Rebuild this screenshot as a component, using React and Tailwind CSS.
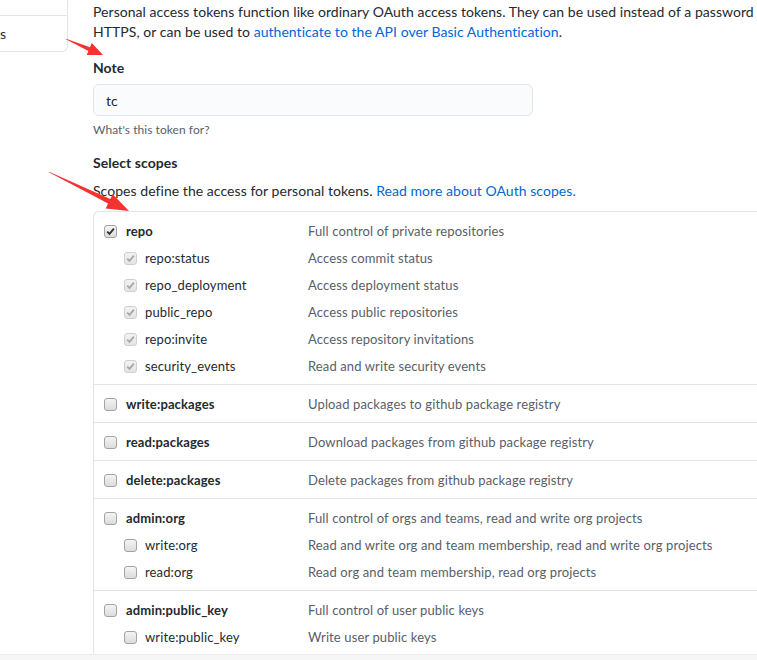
const FONT = { fontFamily: "Lato, 'Noto Sans', sans-serif" };

function arrowPoints(tx, ty, hx, hy, tailW, shaftW, headL, headW) {
  const dx = hx - tx, dy = hy - ty;
  const len = Math.sqrt(dx * dx + dy * dy);
  const ux = dx / len, uy = dy / len;
  const px = -uy, py = ux;
  const bx = hx - ux * headL, by = hy - uy * headL;
  const pts = [
    [tx + px * tailW / 2, ty + py * tailW / 2],
    [bx + px * shaftW / 2, by + py * shaftW / 2],
    [bx + px * headW / 2, by + py * headW / 2],
    [hx, hy],
    [bx - px * headW / 2, by - py * headW / 2],
    [bx - px * shaftW / 2, by - py * shaftW / 2],
    [tx - px * tailW / 2, ty - py * tailW / 2],
  ];
  return pts.map(p => p[0].toFixed(1) + "," + p[1].toFixed(1)).join(" ");
}

function Checkbox({ checked, disabled }) {
  if (disabled) {
    return (
      <span className="flex h-[13px] w-[13px] shrink-0 items-center justify-center rounded-[3px] border border-[#cfcfcf] bg-gradient-to-b from-[#f2f2f2] to-[#e4e4e4]">
        {checked && (
          <svg width="9" height="9" viewBox="0 0 9 9">
            <path d="M1.2 4.6 L3.5 6.9 L7.9 1.6" fill="none" stroke="#a9a9a9" strokeWidth="1.8" />
          </svg>
        )}
      </span>
    );
  }
  return (
    <span className="flex h-[13px] w-[13px] shrink-0 items-center justify-center rounded-[3px] border border-[#a3a3a3] bg-gradient-to-b from-[#f4f4f4] to-[#dcdcdc]">
      {checked && (
        <svg width="9" height="9" viewBox="0 0 9 9">
          <path d="M1.2 4.6 L3.5 6.9 L7.9 1.6" fill="none" stroke="#333" strokeWidth="1.8" />
        </svg>
      )}
    </span>
  );
}

const groups = [
  {
    name: "repo",
    desc: "Full control of private repositories",
    checked: true,
    subs: [
      ["repo:status", "Access commit status"],
      ["repo_deployment", "Access deployment status"],
      ["public_repo", "Access public repositories"],
      ["repo:invite", "Access repository invitations"],
      ["security_events", "Read and write security events"],
    ],
    subChecked: true,
  },
  { name: "write:packages", desc: "Upload packages to github package registry" },
  { name: "read:packages", desc: "Download packages from github package registry" },
  { name: "delete:packages", desc: "Delete packages from github package registry" },
  {
    name: "admin:org",
    desc: "Full control of orgs and teams, read and write org projects",
    subs: [
      ["write:org", "Read and write org and team membership, read and write org projects"],
      ["read:org", "Read org and team membership, read org projects"],
    ],
  },
  {
    name: "admin:public_key",
    desc: "Full control of user public keys",
    subs: [
      ["write:public_key", "Write user public keys"],
      ["read:public_key", "Read user public keys"],
    ],
  },
];

function Group({ g, first }) {
  return (
    <div className={"flex flex-col gap-[7px] pt-[9px] pb-[8px] " + (first ? "" : "border-t border-[#e1e4e8]")}>
      <div className="flex h-[20px] shrink-0 items-center pl-[10px]">
        <div className="flex w-[204px] shrink-0 items-center gap-[9px]">
          <Checkbox checked={g.checked} />
          <span className="font-bold text-[#24292e]">{g.name}</span>
        </div>
        <span className="whitespace-nowrap text-[#586069]">{g.desc}</span>
      </div>
      {(g.subs || []).map(([n, d]) => (
        <div key={n} className="flex h-[20px] shrink-0 items-center pl-[30px]">
          <div className="flex w-[184px] shrink-0 items-center gap-[8px]">
            <Checkbox checked={g.subChecked} disabled={g.subChecked} />
            <span className="text-[#24292e]">{n}</span>
          </div>
          <span className="whitespace-nowrap text-[#586069]">{d}</span>
        </div>
      ))}
    </div>
  );
}

export default function App() {
  return (
    <div style={FONT} className="relative flex h-[660px] w-[757px] flex-col overflow-hidden bg-white text-[14px] tracking-[0.05px] text-[#24292e]">
      <div className="flex h-[654px] shrink-0 items-start overflow-hidden">
        {/* sidebar */}
        <div className="mt-[-30px] flex h-[82px] w-[68px] shrink-0 flex-col overflow-hidden rounded-br-[6px] border-r border-b border-[#e1e4e8]">
          <div className="h-[45px] shrink-0"></div>
          <div className="flex flex-1 justify-end overflow-hidden whitespace-nowrap border-t border-[#e1e4e8] pr-[61px] pt-[8px] leading-[20px]">
            <span className="shrink-0">Personal access tokens</span>
          </div>
        </div>
        {/* main */}
        <div className="ml-[25px] w-[760px] shrink-0 pt-[2px]">
          <p className="leading-[20px]">
            Personal access tokens function like ordinary OAuth access tokens. They can be used instead of a password for Git over HTTPS, or can be used to{" "}
            <span className="text-[#0366d6]">authenticate to the API over Basic Authentication</span>.
          </p>
          <div className="mt-[16px] font-bold leading-[20px]">Note</div>
          <div className="mt-[6px] flex h-[32px] w-[440px] items-center rounded-[6px] border border-[#e1e4e8] bg-[#fafbfc] pl-[12px]">tc</div>
          <div className="mt-[5px] text-[12px] leading-[18px] text-[#586069]">What's this token for?</div>
          <div className="mt-[14px] font-bold leading-[20px]">Select scopes</div>
          <div className="mt-[8px] leading-[20px]">
            Scopes define the access for personal tokens. <span className="text-[#0366d6]">Read more about OAuth scopes.</span>
          </div>
          <div className="mt-[10px] w-[760px] rounded-tl-[6px] border-l border-t border-[#e1e4e8] text-[13px] leading-[20px] tracking-[0.12px]">
            {groups.map((g, i) => (
              <Group key={g.name} g={g} first={i === 0} />
            ))}
          </div>
        </div>
      </div>
      <div className="flex-1 border-t border-[#ececec] bg-[#f6f6f6]"></div>

      <svg className="pointer-events-none absolute left-0 top-0" width="757" height="660">
        <polygon points={arrowPoints(66, 39, 103, 55, 0.5, 4, 15, 13)} fill="#f4332f" />
        <polygon points={arrowPoints(49, 172, 129, 211, 0.5, 5, 22, 16)} fill="#f4332f" />
      </svg>
    </div>
  );
}
